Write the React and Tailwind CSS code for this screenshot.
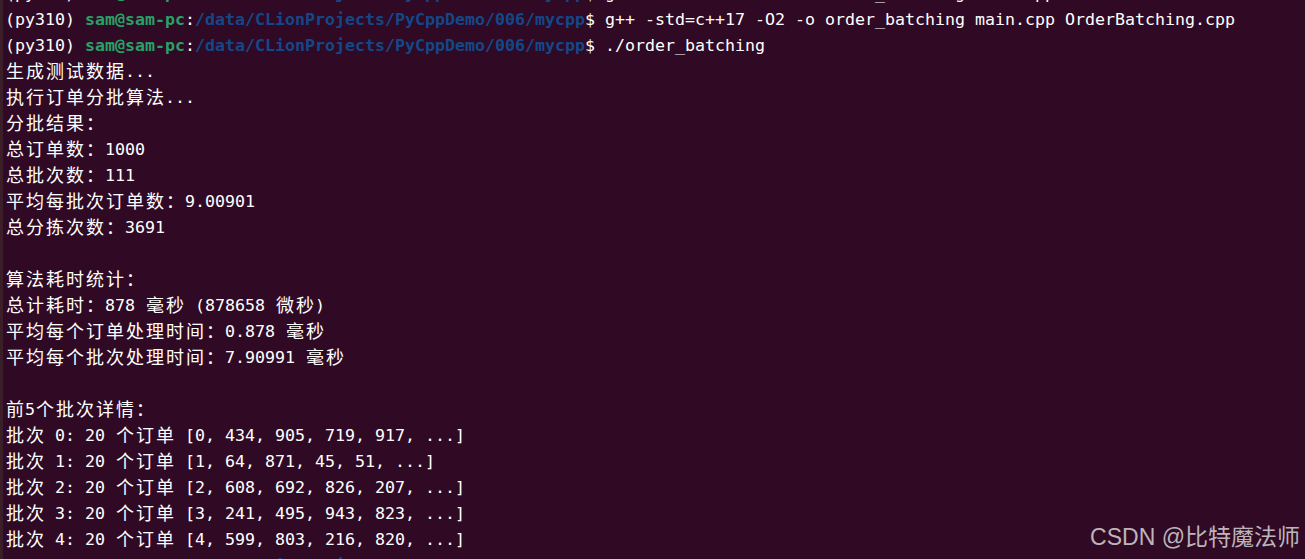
import React from "react";

const G = "text-[#26a269] font-bold";
const B = "text-[#12488b] font-bold";
const W = "text-[#ffffff]";

const prompt = (cmd) => [
  ["(py310) ", W],
  ["sam@sam-pc", G],
  [":", W],
  ["/data/CLionProjects/PyCppDemo/006/mycpp", B],
  ["$ " + cmd, W],
];

const lines = [
  prompt("g++ -std=c++17 -O2 -o order_batching main.cpp"),
  prompt("g++ -std=c++17 -O2 -o order_batching main.cpp OrderBatching.cpp"),
  prompt("./order_batching"),
  [["生成测试数据...", W]],
  [["执行订单分批算法...", W]],
  [["分批结果：", W]],
  [["总订单数：1000", W]],
  [["总批次数：111", W]],
  [["平均每批次订单数：9.00901", W]],
  [["总分拣次数：3691", W]],
  [["", W]],
  [["算法耗时统计：", W]],
  [["总计耗时：878 毫秒 (878658 微秒)", W]],
  [["平均每个订单处理时间：0.878 毫秒", W]],
  [["平均每个批次处理时间：7.90991 毫秒", W]],
  [["", W]],
  [["前5个批次详情：", W]],
  [["批次 0: 20 个订单 [0, 434, 905, 719, 917, ...]", W]],
  [["批次 1: 20 个订单 [1, 64, 871, 45, 51, ...]", W]],
  [["批次 2: 20 个订单 [2, 608, 692, 826, 207, ...]", W]],
  [["批次 3: 20 个订单 [3, 241, 495, 943, 823, ...]", W]],
  [["批次 4: 20 个订单 [4, 599, 803, 216, 820, ...]", W]],
  prompt(""),
];

function isWide(ch) {
  const c = ch.codePointAt(0);
  return c >= 0x2e80;
}

function Seg({ text, cls }) {
  const parts = [];
  let buf = "";
  const chars = Array.from(text);
  chars.forEach((ch, i) => {
    if (isWide(ch)) {
      if (buf) {
        parts.push(<span key={"a" + i}>{buf}</span>);
        buf = "";
      }
      parts.push(
        <span
          key={"w" + i}
          className="inline-block h-[26px] w-[20px] align-top text-center font-['Noto_Sans_CJK_SC',sans-serif] text-[18px] leading-[22px]"
        >
          {ch}
        </span>
      );
    } else {
      buf += ch;
    }
  });
  if (buf) parts.push(<span key="end">{buf}</span>);
  return <span className={cls}>{parts}</span>;
}

export default function App() {
  return (
    <div className="relative flex h-[559px] w-[1305px] overflow-hidden bg-[#300a24]">
      <div className="w-[3px] shrink-0 bg-[#3a1f28]" />
      <div className="-mt-[19px] flex flex-col self-start pl-[2px] font-['DejaVu_Sans_Mono','Liberation_Mono',monospace] text-[16.61px]">
        {lines.map((segs, i) => (
          <div key={i} className="h-[26px] shrink-0 whitespace-pre leading-[26px]">
            {segs.map(([t, c], j) => (
              <Seg key={j} text={t} cls={c} />
            ))}
          </div>
        ))}
      </div>
      <div className="absolute bottom-[7px] right-[5px] font-['Liberation_Sans','Noto_Sans_CJK_SC',sans-serif] text-[23px] leading-[30px] text-[#bdb4bb]">
        CSDN @比特魔法师
      </div>
    </div>
  );
}
